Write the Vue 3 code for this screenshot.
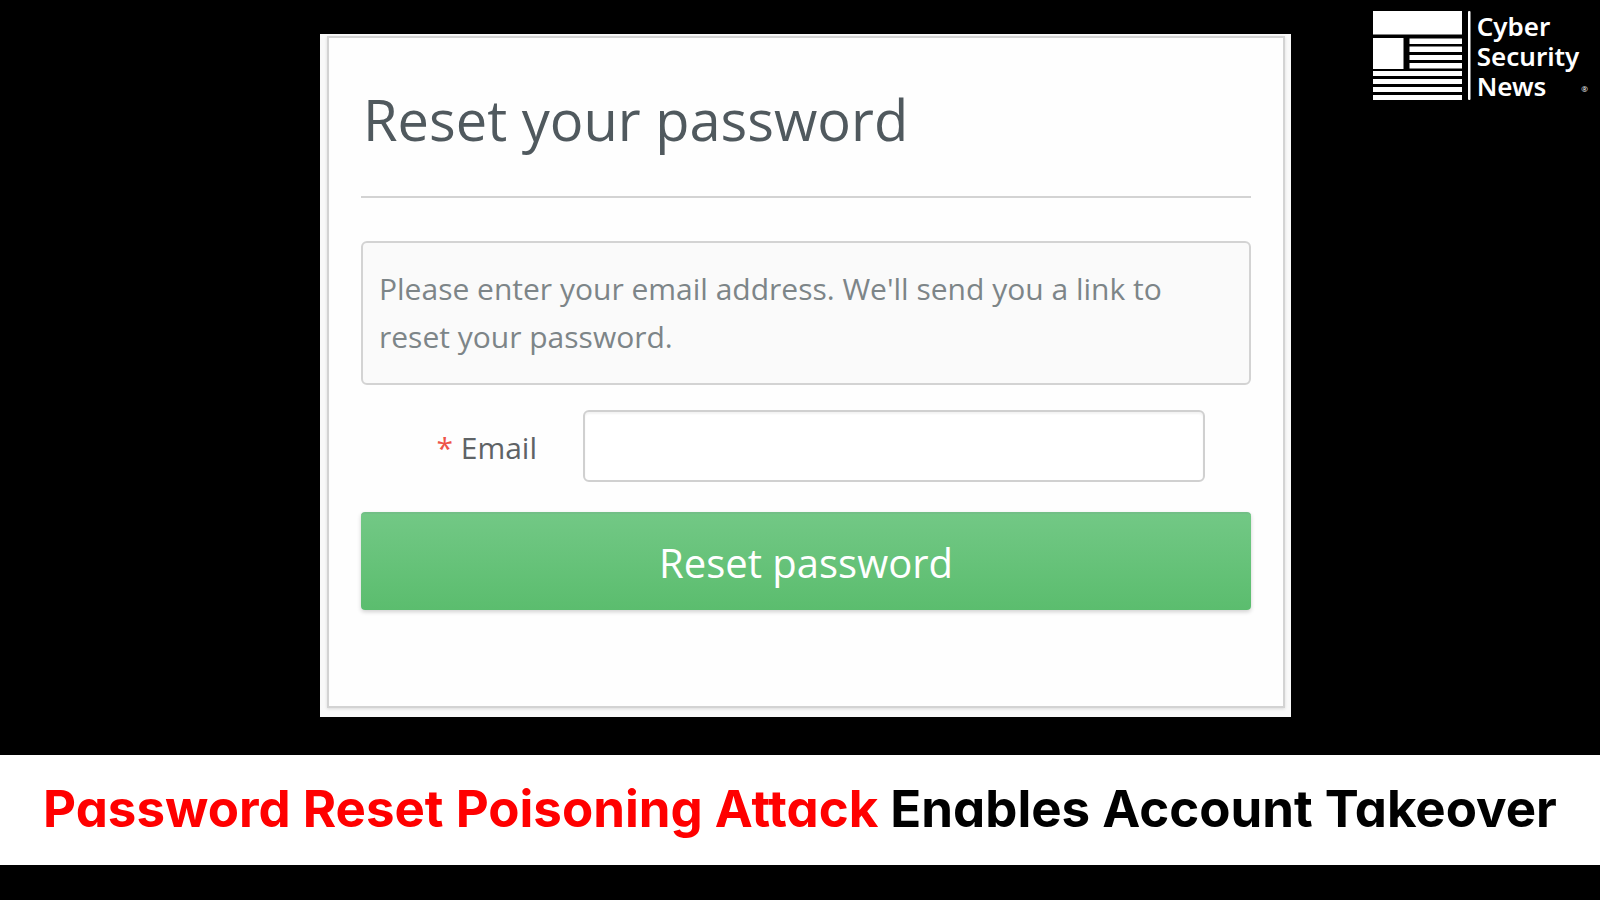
<script setup>
import { ref } from 'vue'

const email = ref('')
const brand = ['Cyber', 'Security', 'News']
</script>

<template>
  <div class="page">
    <main class="stage">
      <div class="frame">
        <form class="panel" @submit.prevent>
          <h1>Reset your password</h1>
          <hr />
          <p class="note">
            Please enter your email address. We'll send you a link to reset your password.
          </p>
          <div class="field">
            <label for="email"><span class="required">*</span> Email</label>
            <input id="email" v-model="email" type="email" required />
          </div>
          <button type="submit">Reset password</button>
        </form>
      </div>
      <div class="brand">
        <svg class="mark" viewBox="0 0 98 90" width="98" height="90" fill="#fff" aria-hidden="true">
          <rect x="0" y="0" width="89" height="23.5" />
          <rect x="0" y="27" width="30.5" height="31" />
          <rect x="36.5" y="27.5" width="52.5" height="5.5" />
          <rect x="36.5" y="35.5" width="52.5" height="5.5" />
          <rect x="36.5" y="44" width="52.5" height="5" />
          <rect x="36.5" y="52" width="52.5" height="5.5" />
          <rect x="0" y="60" width="89" height="5" />
          <rect x="0" y="68" width="89" height="5" />
          <rect x="0" y="76" width="89" height="5" />
          <rect x="0" y="84" width="89" height="5" />
          <rect x="95" y="0" width="2.5" height="89" rx="1" />
        </svg>
        <div class="name">
          <span v-for="word in brand" :key="word">{{ word }}</span>
        </div>
        <span class="registered">®</span>
      </div>
    </main>
    <h2 class="banner">
      <span class="alert">Password Reset Poisoning Attack</span> Enables Account Takeover
    </h2>
  </div>
</template>

<style>
body {
  margin: 0;
  background: #000;
}
</style>

<style scoped>
.page {
  box-sizing: border-box;
  min-height: 100vh;
  display: flex;
  flex-direction: column;
  justify-content: space-between;
  padding-bottom: 35px;
  background: #000;
  font-family: "Open Sans", "Noto Sans", sans-serif;
}
.stage {
  display: grid;
  grid-template-columns: 320fr 971fr 309fr;
  align-items: start;
}
.frame {
  grid-column: 2;
  margin-top: 34px;
  padding: 2px 6px 9px 7px;
  background: #f9f9f9;
}
.panel {
  display: flex;
  flex-direction: column;
  padding: 42px 32px 96px;
  border: 2px solid #d3d3d3;
  background: #fefefe;
  box-shadow: 0 1px 3px rgba(0, 0, 0, 0.12);
}
h1 {
  margin: 0;
  padding-left: 2px;
  font-size: 56px;
  line-height: 78px;
  font-weight: 400;
  color: #50595e;
}
hr {
  width: 100%;
  margin: 38px 0 43px;
  border: 0;
  border-top: 2px solid #d3d3d3;
}
.note {
  margin: 0;
  padding: 22px 16px;
  border: 2px solid #d3d3d3;
  border-radius: 6px;
  background: #fafafa;
  font-size: 30px;
  line-height: 48px;
  color: #7d8588;
}
.field {
  display: grid;
  grid-template-columns: 176px 1fr;
  column-gap: 46px;
  align-items: center;
  margin: 25px 46px 30px 0;
}
label {
  padding-top: 4px;
  text-align: right;
  font-size: 30px;
  line-height: 48px;
  color: #5f6366;
}
.required {
  color: #ee5348;
}
input {
  box-sizing: border-box;
  width: 100%;
  height: 72px;
  padding: 0 16px;
  border: 2px solid #d0d0d0;
  border-radius: 6px;
  background: #fff;
  box-shadow: inset 0 2px 2px rgba(0, 0, 0, 0.05);
  font: inherit;
  font-size: 30px;
}
button {
  height: 98px;
  padding: 0;
  border: 0;
  border-top: 2px solid #72bf86;
  border-radius: 4px;
  background: linear-gradient(#72c885, #5bbd6e);
  box-shadow: 0 2px 4px rgba(0, 0, 0, 0.18);
  font-family: inherit;
  font-size: 40px;
  color: #fff;
}
.brand {
  display: flex;
  justify-self: end;
  margin: 11px 12px 0 0;
  color: #fff;
}
.name {
  display: flex;
  flex-direction: column;
  padding: 0 2px 0 6px;
  font-family: "Noto Sans", sans-serif;
  font-size: 26px;
  line-height: 30px;
  font-weight: 600;
}
.registered {
  align-self: end;
  padding-bottom: 4px;
  font-size: 8px;
  line-height: 16px;
}
.banner {
  margin: 0;
  padding: 19px 0 21px;
  background: #fff;
  font-family: Inter, sans-serif;
  font-size: 51px;
  line-height: 70px;
  font-weight: 700;
  font-feature-settings: "cv11";
  text-align: center;
  color: #000;
}
.alert {
  color: #f00;
}
</style>
